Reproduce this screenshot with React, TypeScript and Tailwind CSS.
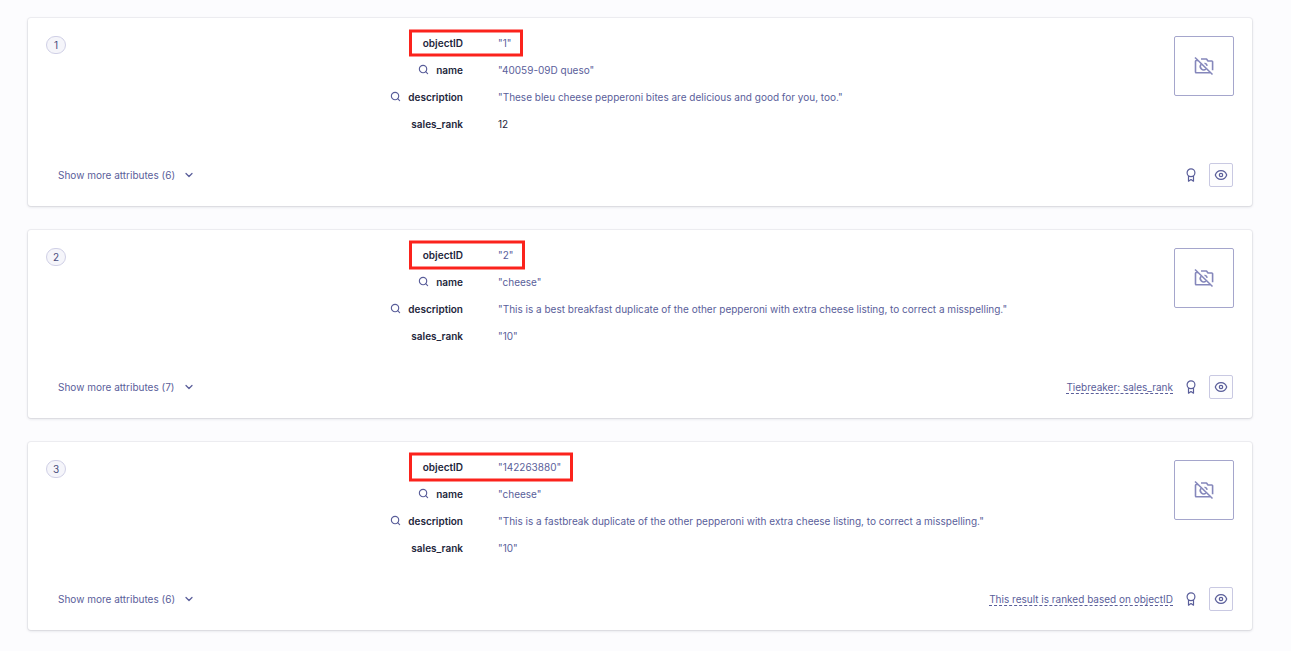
import { FC } from "react";
import { ChevronDown, Search } from "lucide-react";

type Attribute = {
  name: string;
  value: string | number;
  searchable?: boolean;
};

type Hit = {
  position: number;
  attributes: Attribute[];
  more: number;
  reason?: string;
  highlight: string;
};

const hits: Hit[] = [
  {
    position: 1,
    attributes: [
      { name: "objectID", value: "1" },
      { name: "name", value: "40059-09D queso", searchable: true },
      {
        name: "description",
        value:
          "These bleu cheese pepperoni bites are delicious and good for you, too.",
        searchable: true,
      },
      { name: "sales_rank", value: 12 },
    ],
    more: 6,
    highlight: "h-[27px]",
  },
  {
    position: 2,
    attributes: [
      { name: "objectID", value: "2" },
      { name: "name", value: "cheese", searchable: true },
      {
        name: "description",
        value:
          "This is a best breakfast duplicate of the other pepperoni with extra cheese listing, to correct a misspelling.",
        searchable: true,
      },
      { name: "sales_rank", value: "10" },
    ],
    more: 7,
    reason: "Tiebreaker: sales_rank",
    highlight: "h-[29px]",
  },
  {
    position: 3,
    attributes: [
      { name: "objectID", value: "142263880" },
      { name: "name", value: "cheese", searchable: true },
      {
        name: "description",
        value:
          "This is a fastbreak duplicate of the other pepperoni with extra cheese listing, to correct a misspelling.",
        searchable: true,
      },
      { name: "sales_rank", value: "10" },
    ],
    more: 6,
    reason: "This result is ranked based on objectID",
    highlight: "h-[29px]",
  },
];

const CameraOff: FC = () => (
  <svg
    className="h-5 w-5 text-[#8587bb]"
    viewBox="0 0 20 20"
    fill="none"
    stroke="currentColor"
    strokeWidth="1.6"
    strokeLinejoin="round"
  >
    <path d="M1 1.5 18.5 18.5" />
    <path d="M4 4.5H2.300a.8.8 0 0 0-.8.8V16a.8.8 0 0 0 .8.8h14" />
    <path d="M7 3h5.500l1.500 2h3.800a.8.8 0 0 1 .8.8v8.400" />
    <path d="M7.200 8.200a3.400 3.400 0 0 0 4.800 4.800" />
    <path d="M10.500 7.200a3.300 3.300 0 0 1 2.700 2.500" />
  </svg>
);

const Ribbon: FC = () => (
  <svg
    className="h-3.5 w-3.5 text-[#5a5e9a]"
    viewBox="0 0 14 14"
    fill="none"
    stroke="currentColor"
    strokeWidth="1.2"
    strokeLinejoin="round"
  >
    <circle cx="7" cy="4.800" r="3.900" />
    <path d="M4.500 7.800v5.400L7 11.500l2.500 1.700V7.800" />
  </svg>
);

const Eye: FC = () => (
  <svg
    className="h-3.5 w-3.5 text-[#5a5e9a]"
    viewBox="0 0 14 14"
    fill="none"
    stroke="currentColor"
    strokeWidth="1.2"
  >
    <path d="M1.300 7C2.200 4.200 4.300 2.700 7 2.700S11.800 4.200 12.700 7C11.800 9.800 9.700 11.300 7 11.300S2.200 9.800 1.300 7Z" />
    <circle cx="7" cy="7" r="1.700" />
  </svg>
);

const AttributeRow: FC<{ attribute: Attribute; highlight?: string }> = ({
  attribute,
  highlight,
}) => (
  <div className="grid h-[27px] grid-cols-[37fr_63fr] items-center gap-[35px]">
    <dt className="flex items-center justify-end gap-[7px] font-semibold text-[#23263b]">
      {attribute.searchable && (
        <Search className="h-[11px] w-[11px] text-[#5a5e9a]" strokeWidth={2.5} />
      )}
      {attribute.name}
    </dt>
    <dd className="flex">
      {typeof attribute.value === "number" ? (
        <span className="text-[#23263b]">{attribute.value}</span>
      ) : (
        <span className="relative text-[#5a5e9a]">
          "{attribute.value}"
          {highlight && (
            <span
              className={`pointer-events-none absolute top-1/2 -right-3 -left-[89px] -translate-y-1/2 border-3 border-[#fb231c] ${highlight}`}
            />
          )}
        </span>
      )}
    </dd>
  </div>
);

const HitCard: FC<{ hit: Hit }> = ({ hit }) => (
  <li className="rounded-[3px] bg-white px-[18px] pt-[11px] pb-[19px] shadow-[0_0_0_1px_rgba(35,38,59,0.05),0_1px_3px_rgba(35,38,59,0.15)]">
    <div className="flex items-start">
      <span className="mt-[7px] flex h-[18px] w-5 items-center justify-center rounded-full border border-[#d0d0e6] bg-[#f5f5fa] text-[#484c7a]">
        {hit.position}
      </span>
      <dl className="min-w-0 flex-1">
        {hit.attributes.map((attribute) => (
          <AttributeRow
            key={attribute.name}
            attribute={attribute}
            highlight={
              attribute.name === "objectID" ? hit.highlight : undefined
            }
          />
        ))}
      </dl>
      <div className="mt-[7px] flex h-[60px] w-[60px] items-center justify-center rounded-xs border border-[#a5a6cc]">
        <CameraOff />
      </div>
    </div>
    <div className="mt-[26px] flex items-center justify-between pr-px pl-3">
      <button className="flex items-center gap-2 text-[#5a5e9a]">
        Show more attributes ({hit.more})
        <ChevronDown className="h-3 w-3" strokeWidth={2.5} />
      </button>
      <div className="flex items-center gap-[11px]">
        {hit.reason && (
          <a
            href="#"
            className="border-b border-dashed border-[#5a5e9a] leading-3 text-[#5a5e9a]"
          >
            {hit.reason}
          </a>
        )}
        <Ribbon />
        <button
          aria-label="Preview"
          className="flex h-6 w-6 items-center justify-center rounded-xs border border-[#c9c9e2] bg-[#fdfdfe]"
        >
          <Eye />
        </button>
      </div>
    </div>
  </li>
);

const App: FC = () => {
  return (
    <main className="min-h-screen bg-[#fcfcfe] pt-[18px] pr-[39px] pb-[21px] pl-7 font-['Inter',sans-serif] text-[10px] leading-4">
      <ul className="flex flex-col gap-6">
        {hits.map((hit) => (
          <HitCard key={hit.position} hit={hit} />
        ))}
      </ul>
    </main>
  );
};

export default App;
